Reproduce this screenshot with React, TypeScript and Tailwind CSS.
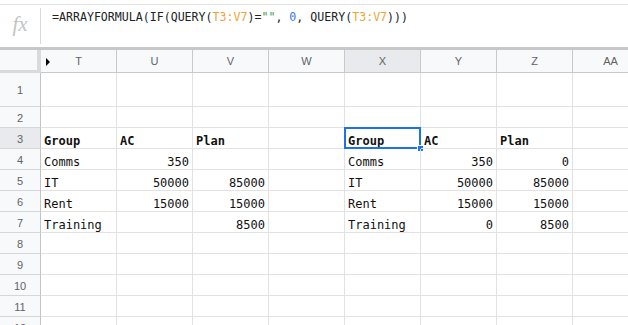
const cols = ["T", "U", "V", "W", "X", "Y", "Z", "AA"];

type Cell = { text: string; align?: "left" | "right"; bold?: boolean };

const rowData: Record<number, Record<string, Cell>> = {
    3: {
        T: { text: "Group", bold: true },
        U: { text: "AC", bold: true },
        V: { text: "Plan", bold: true },
        X: { text: "Group", bold: true },
        Y: { text: "AC", bold: true },
        Z: { text: "Plan", bold: true },
    },
    4: {
        T: { text: "Comms" },
        U: { text: "350", align: "right" },
        X: { text: "Comms" },
        Y: { text: "350", align: "right" },
        Z: { text: "0", align: "right" },
    },
    5: {
        T: { text: "IT" },
        U: { text: "50000", align: "right" },
        V: { text: "85000", align: "right" },
        X: { text: "IT" },
        Y: { text: "50000", align: "right" },
        Z: { text: "85000", align: "right" },
    },
    6: {
        T: { text: "Rent" },
        U: { text: "15000", align: "right" },
        V: { text: "15000", align: "right" },
        X: { text: "Rent" },
        Y: { text: "15000", align: "right" },
        Z: { text: "15000", align: "right" },
    },
    7: {
        T: { text: "Training" },
        V: { text: "8500", align: "right" },
        X: { text: "Training" },
        Y: { text: "0", align: "right" },
        Z: { text: "8500", align: "right" },
    },
};

const FormulaBar = () => (
    <div className="h-[47px] flex flex-col bg-white">
        <div className="h-[5px] border-b border-[#e3e3e3]" />
        <div className="flex flex-1">
            <div className="w-[40px] flex items-center justify-center">
                <span className="text-[21px] italic text-[#c4c4c4] [font-family:'Liberation_Serif',serif] -mt-[2px]">
                    fx
                </span>
            </div>
            <div className="my-[3px] border-l border-[#d9d9d9]" />
            <div className="pl-[11px] pt-[4px] text-[11.6px] leading-[16px] text-[#222] [font-family:'DejaVu_Sans_Mono',monospace] whitespace-nowrap">
                =ARRAYFORMULA(IF(QUERY(
                <span className="text-[#eea436]">T3:V7</span>)=
                <span className="text-[#3c9a4c]">""</span>,{" "}
                <span className="text-[#3b78e7]">0</span>, QUERY(
                <span className="text-[#eea436]">T3:V7</span>)))
            </div>
        </div>
    </div>
);

const HeaderRow = () => (
    <div className="flex h-[26px] border-t-[3px] border-[#c7c7c7]">
        <div className="w-[41px] shrink-0 bg-[#f8f9fa] border-r-[4px] border-b-[3px] border-[#dadada]" />
        {cols.map((c) => (
            <div
                key={c}
                className={`relative w-[76px] shrink-0 flex items-center justify-center border-r border-b border-[#c9c9c9] text-[11px] text-[#5f6368] [font-family:'Liberation_Sans',sans-serif] ${
                    c === "X" ? "bg-[#e8eaed]" : "bg-[#f8f9fa]"
                }`}
            >
                {c === "T" && (
                    <span className="absolute left-[5px] top-[8px] w-0 h-0 border-y-[4px] border-y-transparent border-l-[4px] border-l-black" />
                )}
                {c}
            </div>
        ))}
    </div>
);

const GridRow = ({ n }: { n: number }) => {
    const cells = rowData[n] || {};
    const h = n === 1 ? "h-[34px]" : "h-[21px]";
    return (
        <div className={`flex ${h}`}>
            <div
                className={`w-[41px] shrink-0 flex items-center justify-center pt-[2px] border-r border-b border-r-[#c4c4c4] border-b-[#d6d6d6] text-[11px] text-[#5f6368] [font-family:'Liberation_Sans',sans-serif] ${
                    n === 3 ? "bg-[#e8eaed]" : "bg-[#f8f9fa]"
                }`}
            >
                {n}
            </div>
            {cols.map((c) => {
                const cell = cells[c];
                const selected = n === 3 && c === "X";
                return (
                    <div
                        key={c}
                        className={`relative w-[76px] shrink-0 flex items-end px-[3px] border-r border-b border-[#e2e2e2] text-[12px] leading-[13px] text-[#111] [font-family:'DejaVu_Sans_Mono',monospace] whitespace-nowrap ${
                            cell?.align === "right" ? "justify-end" : "justify-start"
                        } ${cell?.bold ? "font-bold" : ""}`}
                    >
                        {cell?.text}
                        {selected && (
                            <>
                                <div className="absolute -left-[1px] -top-[1px] -right-[1px] -bottom-[1px] border-2 border-[#1a73e8]" />
                                <div className="absolute -right-[4px] -bottom-[4px] w-[7px] h-[7px] bg-[#1a73e8] border border-white" />
                            </>
                        )}
                    </div>
                );
            })}
        </div>
    );
};

export default function App() {
    return (
        <div className="w-[628px] h-[325px] overflow-hidden bg-white">
            <FormulaBar />
            <HeaderRow />
            {Array.from({ length: 12 }, (_, i) => (
                <GridRow key={i + 1} n={i + 1} />
            ))}
        </div>
    );
}
